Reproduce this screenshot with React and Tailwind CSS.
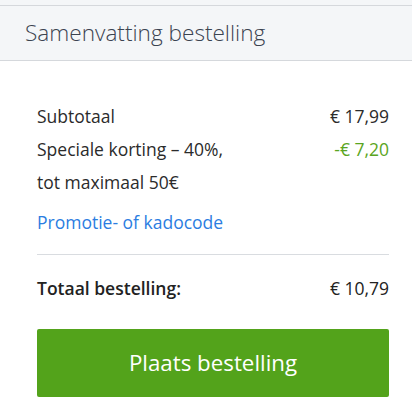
export default function App() {
  return (
    <div className="w-[412px] h-[402px] bg-white font-['Open_Sans',sans-serif] overflow-hidden">
      <div className="h-[5px] bg-[#f4f6f8]" />
      <div className="h-[56px] bg-[#f4f6f8] border-y border-[#d5d8dc] flex items-center pl-[25px]">
        <h2 className="text-[22.6px] font-light text-[#3b4350] leading-none">Samenvatting bestelling</h2>
      </div>
      <div className="pl-[37px] pr-[23px] pt-[39px] text-[17.5px] text-[#2b2b2b]">
        <div className="flex justify-between leading-[33px]">
          <span>Subtotaal</span>
          <span>€ 17,99</span>
        </div>
        <div className="flex justify-between leading-[33px]">
          <span>
            Speciale korting – 40%,
            <br />
            tot maximaal 50€
          </span>
          <span className="text-[#5aa522]">-€ 7,20</span>
        </div>
        <div className="mt-[7px] leading-[33px]">
          <a className="text-[#2b7de1]">Promotie- of kadocode</a>
        </div>
        <div className="mt-[15px] border-t border-[#d9dce0]" />
        <div className="flex justify-between mt-[17px] leading-[33px]">
          <span className="font-semibold text-[#222]">Totaal bestelling:</span>
          <span className="text-[#222]">€ 10,79</span>
        </div>
        <button className="mt-[24px] w-full h-[68px] rounded-[2px] bg-[#53a31b] text-white text-[22.3px] flex items-center justify-center">
          Plaats bestelling
        </button>
      </div>
    </div>
  );
}
